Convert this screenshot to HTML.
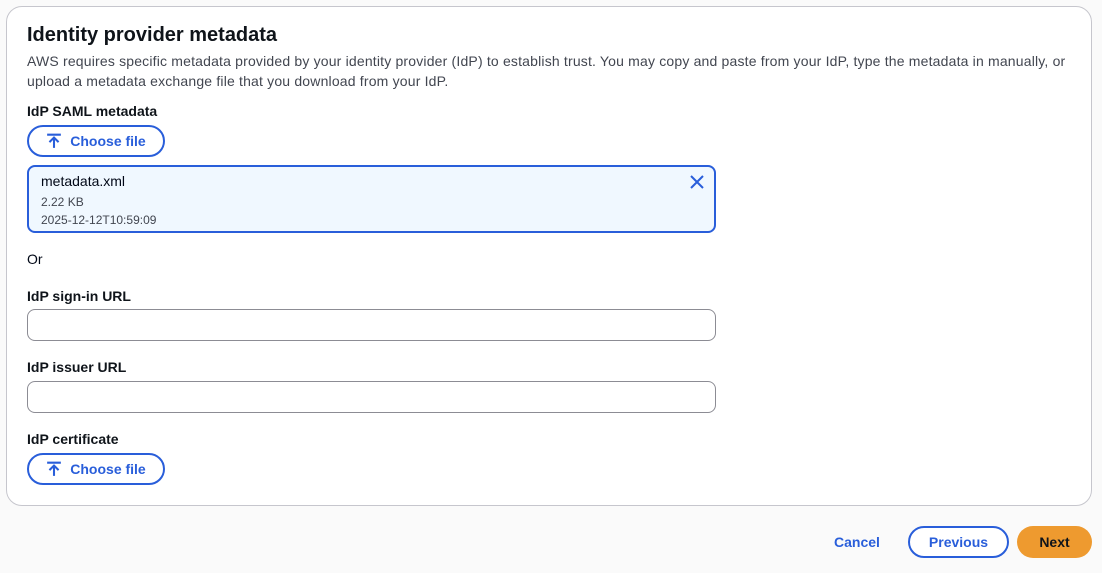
<!DOCTYPE html>
<html><head><meta charset="utf-8"><style>
*{box-sizing:border-box;margin:0;padding:0}
body{width:1102px;height:573px;background:#fafafa;font-family:"Liberation Sans",Arial,sans-serif;color:#000716;position:relative;overflow:hidden}
.card{position:absolute;left:6px;top:6px;width:1086px;height:500px;background:#fff;border:1px solid #c6c6cd;border-radius:16px}
.abs{position:absolute}
h1{position:absolute;left:27px;top:24px;font-size:20px;font-weight:bold;color:#0f141a}
.desc{left:27px;top:51px;font-size:14px;line-height:20px;color:#424650;width:1050px;letter-spacing:0.18px}
.lbl{font-size:14px;font-weight:bold;color:#0f141a;left:27px}
.btn{position:absolute;left:27px;width:138px;height:32px;border:2px solid #295eda;border-radius:16px;color:#295eda;font-weight:bold;font-size:14px;display:flex;align-items:center;justify-content:center;gap:8px}
.file{left:27px;top:165px;width:689px;height:68px;border:2px solid #295eda;border-radius:8px;background:#f0f8ff}
.input{position:absolute;left:27px;width:689px;height:32px;border:1px solid #8c8c94;border-radius:8px;background:#fff}
.fb{position:absolute;top:526px;height:32px;border-radius:16px;font-weight:bold;font-size:14px;display:flex;align-items:center;justify-content:center}
</style></head><body>
<div class="card"></div>
<h1>Identity provider metadata</h1>
<div class="abs desc">AWS requires specific metadata provided by your identity provider (IdP) to establish trust. You may copy and paste from your IdP, type the metadata in manually, or upload a metadata exchange file that you download from your IdP.</div>
<div class="abs lbl" style="top:103px">IdP SAML metadata</div>
<div class="btn" style="top:125px"><svg width="16" height="16" viewBox="0 0 14 14" fill="none" stroke="#295eda" stroke-width="1.8"><path d="M1 1.5h12M7 13V4M3 8l4-4 4 4"/></svg>Choose file</div>
<div class="abs file">
<div class="abs" style="left:12px;top:6px;font-size:14px">metadata.xml</div>
<div class="abs" style="left:12px;top:28px;font-size:12px;color:#424650">2.22 KB</div>
<div class="abs" style="left:12px;top:46px;font-size:12px;color:#424650">2025-12-12T10:59:09</div>
<svg class="abs" style="left:661px;top:8px" width="14" height="14" viewBox="0 0 14 14" stroke="#295eda" stroke-width="2"><path d="M1 1l12 12M13 1L1 13"/></svg>
</div>
<div class="abs" style="left:27px;top:251px;font-size:14px">Or</div>
<div class="abs lbl" style="top:288px">IdP sign-in URL</div>
<div class="input" style="top:309px"></div>
<div class="abs lbl" style="top:359px">IdP issuer URL</div>
<div class="input" style="top:381px"></div>
<div class="abs lbl" style="top:431px">IdP certificate</div>
<div class="btn" style="top:453px"><svg width="16" height="16" viewBox="0 0 14 14" fill="none" stroke="#295eda" stroke-width="1.8"><path d="M1 1.5h12M7 13V4M3 8l4-4 4 4"/></svg>Choose file</div>
<div class="fb" style="left:830px;width:54px;color:#295eda">Cancel</div>
<div class="fb" style="left:908px;width:101px;border:2px solid #295eda;color:#295eda;background:#fff">Previous</div>
<div class="fb" style="left:1017px;width:75px;background:#ee9a2f;color:#0f141a">Next</div>
</body></html>
